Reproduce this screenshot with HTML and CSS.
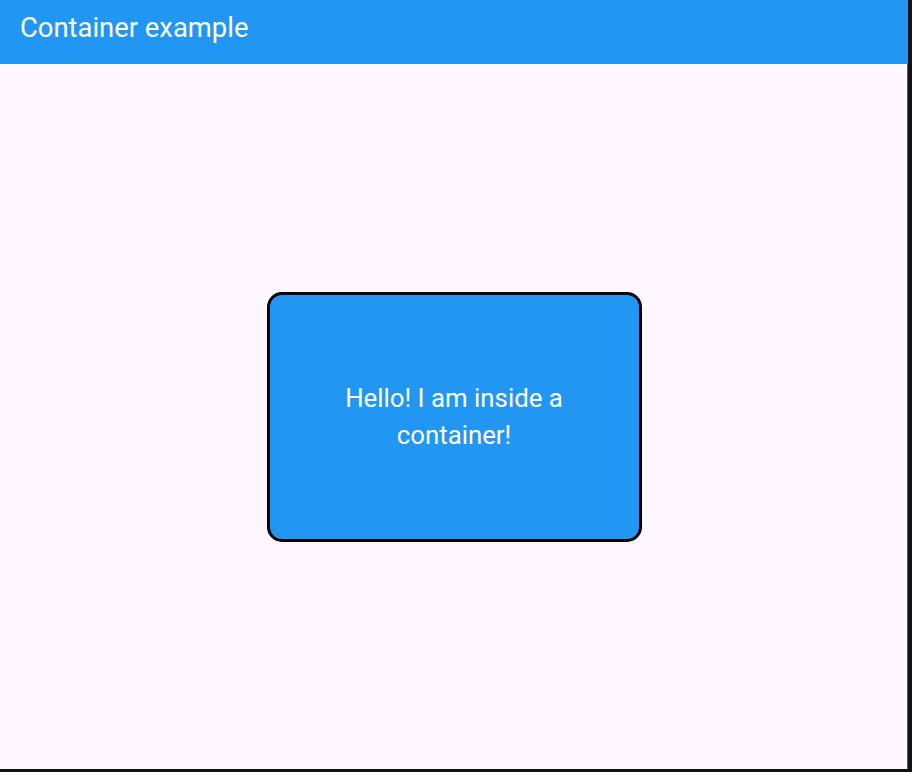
FILE: index.html
```html
<!DOCTYPE html>
<html>
<head>
<meta charset="utf-8">
<link rel="stylesheet" href="styles.css">
</head>
<body>
<div class="frame">
  <div class="app">
    <header class="appbar"><h1 class="title">Container example</h1></header>
    <main class="content">
      <div class="box"><p class="msg">Hello! I am inside a container!</p></div>
    </main>
  </div>
</div>
</body>
</html>
```
FILE: styles.css
```css
html, body { margin: 0; padding: 0; }
body { width: 912px; height: 772px; background: #0f1419; font-family: Roboto, "Noto Sans", sans-serif; overflow: hidden; }
.frame { width: 912px; height: 772px; display: flex; }
.app { width: 908px; height: 769px; background: #fef7ff; display: flex; flex-direction: column; box-shadow: inset -1px 0 #5a5f66; }
.appbar { height: 64px; background: #2196f3; display: flex; align-items: center; padding: 0 20px 6px; box-sizing: border-box; flex: none; }
.title { margin: 0; color: #fff; font-size: 27.4px; font-weight: 400; line-height: 1; }
.content { flex: 1; display: flex; align-items: center; justify-content: center; }
.box { width: 375px; height: 250px; box-sizing: border-box; background: #2196f3; border: 3px solid #000; border-radius: 15px; display: flex; align-items: center; justify-content: center; padding: 0 50px; }
.msg { margin: 0; color: #fff; font-size: 25.8px; line-height: 37px; text-align: center; }
```
